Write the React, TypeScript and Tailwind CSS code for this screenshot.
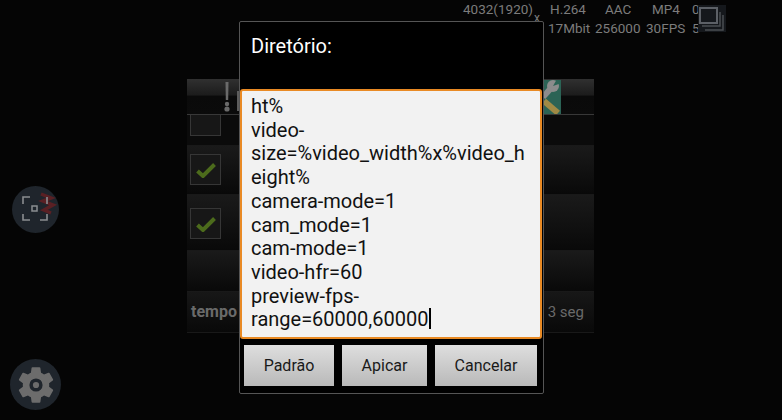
const roboto = "font-['Roboto',sans-serif]"

function CheckBox({ checked, className }: { checked?: boolean; className: string }) {
  return (
    <div className={`ml-[3px] w-[31px] border border-[#363636] bg-[#171717] flex items-center justify-center ${className}`}>
      {checked && (
        <svg width="20" height="16" viewBox="0 0 20 16">
          <path d="M1.5 9 L7 14 L18.5 2.5" fill="none" stroke="#4c6b1c" strokeWidth="4" />
        </svg>
      )}
    </div>
  )
}

function SettingsList() {
  return (
    <div className="w-[407px] flex flex-col">
      <div className="h-[36px] bg-[linear-gradient(#303030_0%,#1c1c1c_45%,#0a0a0a_50%,#0b0b0b_100%)] border-b border-[#383838] flex items-center justify-between">
        <div className="ml-[36px] flex items-center gap-[6px]">
          <svg width="8" height="30" viewBox="0 0 8 30">
            <path d="M2.5 0 H5.5 L5.2 18 H2.8 Z" fill="#6a6a6a" />
            <circle cx="4" cy="22" r="2.2" fill="#6a6a6a" />
            <circle cx="4" cy="27" r="2.6" fill="#6a6a6a" />
          </svg>
          <div className="w-[4px] h-[20px] mt-[8px] bg-[#5c5c5c]" />
        </div>
        <svg width="17" height="34" viewBox="0 0 17 34" className="mr-[33px]">
          <rect width="17" height="34" fill="#2b6355" />
          <path d="M0 21 L14 33" stroke="#a08a45" strokeWidth="6" />
          <path d="M-1 17 L8 7" stroke="#8c8c8c" strokeWidth="6" />
          <circle cx="9" cy="6" r="6" fill="#8c8c8c" />
          <path d="M9 6 L13 -1 L18 3 Z" fill="#2b6355" />
        </svg>
      </div>
      <div className="h-[31px] bg-[#0b0b0b] border-b border-[#191919]">
        <CheckBox className="h-[21px] border-t-0" />
      </div>
      <div className="h-[49px] bg-[linear-gradient(#1a1a1a,#090909)] border-b border-[#191919] pt-[8px]">
        <CheckBox checked className="h-[31px]" />
      </div>
      <div className="h-[56px] bg-[linear-gradient(#1a1a1a,#090909)] border-b border-[#191919] pt-[13px]">
        <CheckBox checked className="h-[31px]" />
      </div>
      <div className="h-[41px] bg-[linear-gradient(#1a1a1a,#090909)] border-b border-[#191919]" />
      <div className="h-[41px] bg-[linear-gradient(#171717,#090909)] border-b border-[#191919] flex items-center justify-between pl-[4px] pr-[10px]">
        <span className="text-[16px] font-bold text-[#6a6a6a]">tempo</span>
        <span className="text-[15px] text-[#6a6a6a]">3 seg</span>
      </div>
    </div>
  )
}

function Dialog() {
  const lines = [
    'ht%',
    'video-',
    'size=%video_width%x%video_h',
    'eight%',
    'camera-mode=1',
    'cam_mode=1',
    'cam-mode=1',
    'video-hfr=60',
    'preview-fps-',
    'range=60000,60000',
  ]
  return (
    <div className="absolute left-[239px] top-[21px] w-[305px] h-[373px] border border-[#555555] rounded-[2px] bg-black flex flex-col">
      <div className="h-[67px] pl-[11px] pt-[11px] text-[20px] leading-[26px] text-white">Diretório:</div>
      <div className="w-[302px] h-[250px] border-[2.5px] border-[#e98a24] rounded-[3px] bg-[#f2f2f2] pl-[9px] pt-[4px] text-[20px] leading-[23.7px] text-[#111111]">
        {lines.map((l, i) => (
          <div key={i} className="whitespace-nowrap">
            {l}
            {i === lines.length - 1 && <span className="inline-block w-[1.5px] h-[21px] ml-[1px] align-[-3px] bg-black" />}
          </div>
        ))}
      </div>
      <div className="mt-[6px] pl-[4px] flex gap-[8px] text-[16px] text-[#1a1a1a]">
        <button className="w-[90px] h-[41px] bg-[linear-gradient(#dedede,#b9b9b9)]">Padrão</button>
        <button className="w-[85px] h-[41px] bg-[linear-gradient(#dedede,#b9b9b9)]">Apicar</button>
        <button className="w-[102px] h-[41px] bg-[linear-gradient(#dedede,#b9b9b9)]">Cancelar</button>
      </div>
    </div>
  )
}

export default function App() {
  return (
    <div className={`relative w-[782px] h-[420px] overflow-hidden bg-[#050505] ${roboto}`}>
      <div className="flex justify-start pl-[187px] pt-[79px]">
        <SettingsList />
      </div>

      {/* status do gravador */}
      <div className="absolute left-[463px] top-0 text-[13.5px] leading-[19px] text-[#7c7c7c]">
        <div className="flex whitespace-nowrap h-[19px]">
          <span className="w-[71px]">4032(1920)</span>
          <span className="w-[16px] text-[12px] leading-[12px] pt-[12px]">x</span>
          <span className="w-[55px]">H.264</span>
          <span className="w-[47px]">AAC</span>
          <span className="w-[40px]">MP4</span>
          <span>0</span>
        </div>
        <div className="flex whitespace-nowrap h-[19px]">
          <span className="w-[85px] text-[#1c1c1c]">2268(1080)</span>
          <span className="w-[47px]">17Mbit</span>
          <span className="w-[51px]">256000</span>
          <span className="w-[46px]">30FPS</span>
          <span>5</span>
        </div>
      </div>

      <div className="absolute left-[698px] top-[5px] w-[28px] h-[27px] bg-[#15181c]">
        <svg width="28" height="27" viewBox="0 0 28 27">
          <rect x="2" y="3" width="17" height="15" fill="none" stroke="#5c6066" strokeWidth="2" />
          <path d="M22 7 V21 H4" fill="none" stroke="#4a4d52" strokeWidth="1.5" />
          <path d="M25 10 V25 H7" fill="none" stroke="#4a4d52" strokeWidth="1.5" />
        </svg>
      </div>

      <Dialog />

      {/* botões flutuantes */}
      <div className="absolute left-[12px] top-[186px] w-[47px] h-[47px] rounded-full bg-[#1f252c]">
        <svg width="47" height="47" viewBox="0 0 47 47">
          <path d="M29 8 L39 12 L31 15 L41 19 L32 24 L39 27" fill="none" stroke="#5a2024" strokeWidth="3.5" />
          <path d="M19 10 H12 V17 M12 27 V33 H19 M29 33 H36 V27 M36 17 V10" fill="none" stroke="#8a8d90" strokeWidth="1.6" transform="translate(-1 1)" />
          <rect x="20" y="20" width="5" height="5" fill="none" stroke="#8a8d90" strokeWidth="1.5" />
        </svg>
      </div>
      <div className="absolute left-[10px] top-[359px] w-[51px] h-[51px] rounded-full bg-[#1f252c] flex items-center justify-center">
        <svg width="44" height="44" viewBox="0 0 24 24">
          <path
            fillRule="evenodd"
            fill="#6c6c6c"
            d="M19.14 12.94c.04-.3.06-.61.06-.94s-.02-.64-.07-.94l2.03-1.58a.5.5 0 0 0 .12-.64l-1.92-3.32a.5.5 0 0 0-.6-.22l-2.39.96a7 7 0 0 0-1.62-.94l-.36-2.54a.5.5 0 0 0-.49-.42h-3.84a.5.5 0 0 0-.48.42l-.36 2.54a7.4 7.4 0 0 0-1.62.94l-2.39-.96a.5.5 0 0 0-.59.22L2.74 8.84a.5.5 0 0 0 .12.64l2.03 1.58c-.05.3-.09.63-.09.94s.02.64.07.94l-2.03 1.58a.5.5 0 0 0-.12.64l1.92 3.32c.12.22.37.29.59.22l2.39-.96c.5.38 1.03.7 1.62.94l.36 2.54c.05.24.24.42.48.42h3.84c.24 0 .44-.18.48-.42l.36-2.54a7 7 0 0 0 1.62-.94l2.39.96c.22.08.47 0 .59-.22l1.92-3.32a.5.5 0 0 0-.12-.64zM12 15.6A3.6 3.6 0 1 1 12 8.4a3.6 3.6 0 0 1 0 7.2z"
          />
          <circle cx="12" cy="12" r="1.7" fill="#6c6c6c" />
        </svg>
      </div>
    </div>
  )
}
